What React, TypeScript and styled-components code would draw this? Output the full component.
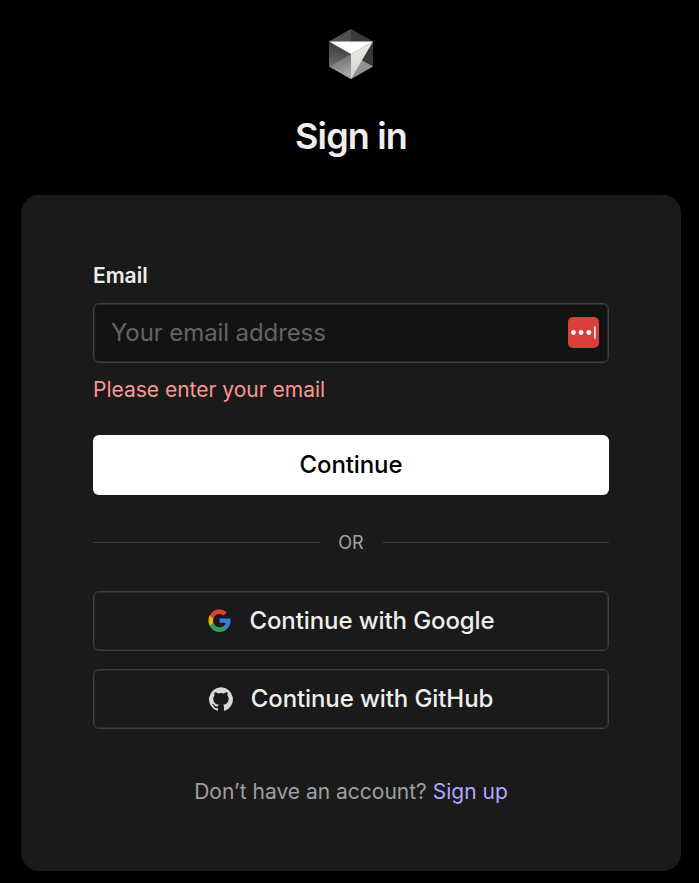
import React from "react";
import styled, { createGlobalStyle } from "styled-components";

const GlobalStyle = createGlobalStyle`
  *, *::before, *::after { box-sizing: border-box; }
  body {
    margin: 0;
    background: #000;
    color: #eeeeec;
    font-family: Inter, "Liberation Sans", sans-serif;
  }
`;

const Page = styled.main`
  min-height: 883px;
  padding: 27px 18px 12px 21px;
  display: flex;
  flex-direction: column;
  align-items: center;
  overflow: hidden;
`;

const Logo = styled.svg`
  display: block;
  width: 54px;
  height: 54px;
`;

const Title = styled.h1`
  margin: 33px 0 0;
  height: 45px;
  font-size: 36px;
  line-height: 45px;
  font-weight: 600;
  letter-spacing: -0.85px;
`;

const Card = styled.section`
  width: 660px;
  height: 676px;
  margin-top: 36px;
  padding: 65px 71px 0;
  border: 1px solid #1d1d1d;
  border-left-color: #131313;
  border-radius: 18px;
  background: #1a1a1a;
  display: flex;
  flex-direction: column;
`;

const Label = styled.label`
  font-size: 21px;
  line-height: 30px;
  font-weight: 600;
`;

const Field = styled.div`
  height: 60px;
  margin-top: 12px;
  padding: 0 9px 0 17px;
  display: flex;
  align-items: center;
  border: 1px solid #414141;
  border-radius: 6px;
  box-shadow: inset 0 0 0 1px #282828;
  background: #131313;
`;

const Input = styled.input`
  flex: 1;
  min-width: 0;
  padding: 0;
  border: 0;
  outline: 0;
  background: transparent;
  color: #eeeeec;
  font: 400 24px/36px Inter, "Liberation Sans", sans-serif;
  letter-spacing: -0.1px;
  &::placeholder { color: #646464; opacity: 1; }
`;

const PasswordIcon = styled.svg`
  display: block;
  width: 32px;
  height: 32px;
`;

const ErrorText = styled.p`
  margin: 12px 0 0;
  color: #ff9592;
  font-size: 21px;
  line-height: 30px;
`;

const Button = styled.button<{ $solid?: boolean; $top: number }>`
  height: 60px;
  flex-shrink: 0;
  margin: ${({ $top }) => $top}px 0 0;
  padding: 0;
  display: flex;
  align-items: center;
  justify-content: center;
  gap: 18px;
  border: ${({ $solid }) => ($solid ? "0" : "1px solid #414141")};
  border-radius: 6px;
  box-shadow: ${({ $solid }) => ($solid ? "none" : "inset 0 0 0 1px #2a2a2a")};
  background: ${({ $solid }) => ($solid ? "#fff" : "transparent")};
  color: ${({ $solid }) => ($solid ? "#000" : "#eeeeec")};
  font: 500 24px/36px Inter, "Liberation Sans", sans-serif;
  letter-spacing: -0.1px;
`;

const ProviderIcon = styled.svg`
  display: block;
  width: 24px;
  height: 24px;
`;

const Divider = styled.div`
  height: 24px;
  margin-top: 36px;
  display: flex;
  align-items: center;
  gap: 18px;
  color: #a0a0a0;
  font-size: 18px;
  line-height: 24px;
`;

const Rule = styled.span`
  flex: 1;
  height: 1px;
  margin-bottom: 1px;
  background: #3a3a3a;
`;

const Footer = styled.p`
  margin: 48px 0 0;
  color: #a0a0a0;
  font-size: 21px;
  line-height: 30px;
  text-align: center;
`;

const SignUp = styled.a`
  color: #b1a9ff;
  text-decoration: none;
`;

function CubeLogo() {
  return (
    <Logo viewBox="0 0 54 54" aria-hidden="true">
      <defs>
        <linearGradient id="leftFace" x1="10" y1="40" x2="14" y2="16" gradientUnits="userSpaceOnUse">
          <stop stopColor="#6a6a6a" /><stop offset="1" stopColor="#3a3a3a" />
        </linearGradient>
        <linearGradient id="bottomFace" x1="14" y1="32" x2="20" y2="50" gradientUnits="userSpaceOnUse">
          <stop stopColor="#777" /><stop offset="1" stopColor="#a8a8a8" />
        </linearGradient>
        <linearGradient id="frontFace" x1="30" y1="25" x2="32" y2="51" gradientUnits="userSpaceOnUse">
          <stop stopColor="#e5e5e1" /><stop offset="1" stopColor="#d2d2ce" />
        </linearGradient>
      </defs>
      <path fill="#383838" d="M27 2 49 14.5v25L27 52 5 39.5v-25Z" />
      <path fill="#505050" d="M27 2v13L5 14.5Z" />
      <path fill="#393939" d="M27 2v13l22-.5Z" />
      <path fill="url(#leftFace)" d="M5 14.5 27 27 5 39.5Z" />
      <path fill="url(#bottomFace)" d="M5 39.5 27 27v25Z" />
      <path fill="#393939" d="M49 14.5v25L36 32Z" />
      <path fill="#929292" d="M49 39.5 27 52V27Z" />
      <path fill="url(#frontFace)" d="M27 27 49 14.5 27 52Z" />
      <path fill="#fff" d="M5 14.5h44L27 27Z" />
    </Logo>
  );
}

function GoogleIcon() {
  return (
    <ProviderIcon viewBox="-.5 .5 24 24" aria-hidden="true">
      <path fill="#3e7be0" d="M23.1 12.25c0-.78-.07-1.53-.2-2.25H12v4.26h6.23a5.34 5.34 0 0 1-2.31 3.5v2.77h3.57c2.08-1.92 3.61-4.74 3.61-8.28Z" />
      <path fill="#31a350" d="M12 23.5c2.97 0 5.46-.98 7.49-2.97l-3.57-2.77c-.98.66-2.23 1.06-3.92 1.06-2.86 0-5.29-1.93-6.16-4.53H2.18v2.84A11.5 11.5 0 0 0 12 23.5Z" />
      <path fill="#eeb008" d="M5.84 14.29a6.92 6.92 0 0 1 0-4.38V7.07H2.18a11.5 11.5 0 0 0 0 10.06Z" />
      <path fill="#db4032" d="M12 5.38c1.62 0 3.06.56 4.21 1.64l3.15-3.15C17.45 2.09 14.97.7 12 .7a11.5 11.5 0 0 0-9.82 6.37l3.66 2.84C6.71 7.31 9.14 5.38 12 5.38Z" />
    </ProviderIcon>
  );
}

function GitHubIcon() {
  return (
    <ProviderIcon viewBox="0 0 24 24" fill="#d9d9d9" aria-hidden="true">
      <path d="M12 .3a12 12 0 0 0-3.8 23.38c.6.12.83-.26.83-.57L9 21.07c-3.34.72-4.04-1.61-4.04-1.61-.55-1.39-1.34-1.76-1.34-1.76-1.08-.74.09-.73.09-.73 1.2.09 1.83 1.24 1.83 1.24 1.08 1.83 2.81 1.3 3.5 1 .1-.78.42-1.31.76-1.61-2.67-.3-5.47-1.33-5.47-5.93 0-1.31.47-2.38 1.24-3.22-.14-.3-.54-1.52.1-3.18 0 0 1-.32 3.3 1.23a11.5 11.5 0 0 1 6 0c2.28-1.55 3.29-1.23 3.29-1.23.64 1.66.24 2.88.12 3.18a4.65 4.65 0 0 1 1.23 3.22c0 4.61-2.8 5.63-5.48 5.92.42.36.81 1.1.81 2.22l-.01 3.29c0 .31.2.69.82.57A12 12 0 0 0 12 .3Z" />
    </ProviderIcon>
  );
}

export default function App() {
  return (
    <>
      <GlobalStyle />
      <Page>
        <CubeLogo />
        <Title>Sign in</Title>
        <Card>
          <Label htmlFor="email">Email</Label>
          <Field>
            <Input id="email" type="email" placeholder="Your email address" />
            <PasswordIcon viewBox="0 0 32 32" aria-hidden="true">
              <rect x="1" y="0" width="31" height="31" rx="5" fill="#d83f3a" />
              <circle cx="6.4" cy="15.5" r="2.4" fill="#fff" />
              <circle cx="14.1" cy="15.5" r="2.4" fill="#fff" />
              <circle cx="21.8" cy="15.5" r="2.4" fill="#fff" />
              <rect x="27" y="9.3" width="1.8" height="12.4" rx=".8" fill="#fbe1e0" />
            </PasswordIcon>
          </Field>
          <ErrorText>Please enter your email</ErrorText>
          <Button $solid $top={30}>Continue</Button>
          <Divider><Rule />OR<Rule /></Divider>
          <Button $top={36}><GoogleIcon />Continue with Google</Button>
          <Button $top={18}><GitHubIcon />Continue with GitHub</Button>
          <Footer>Don’t have an account? <SignUp href="#">Sign up</SignUp></Footer>
        </Card>
      </Page>
    </>
  );
}
